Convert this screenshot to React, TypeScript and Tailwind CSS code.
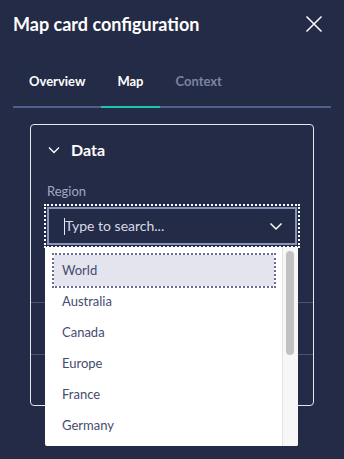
import React from "react";

const items = ["World", "Australia", "Canada", "Europe", "France", "Germany"];

export default function App() {
  return (
    <div
      className="relative w-[344px] h-[459px] overflow-hidden bg-[#242b46] text-white"
      style={{ fontFamily: "Lato, 'Open Sans', sans-serif" }}
    >
      <div className="flex items-start justify-between pl-[13px] pr-[21px] pt-[12px]">
        <h1 className="text-[18px] font-bold leading-[24px]">Map card configuration</h1>
        <svg width="18" height="18" viewBox="0 0 18 18" className="mt-[3px]">
          <path d="M1.5 1.5 L16.5 16.5 M16.5 1.5 L1.5 16.5" stroke="#ffffff" strokeWidth="1.5" fill="none" />
        </svg>
      </div>

      <div className="mx-[13px] mt-[35px] flex border-b-2 border-[#535d8c] text-[13px] font-bold leading-[20px]">
        <div className="px-4 pb-[15px]">Overview</div>
        <div className="-mb-[2px] border-b-2 border-[#1cc7a8] px-4 pb-[15px]">Map</div>
        <div className="px-4 pb-[15px] text-[#7c84a2]">Context</div>
      </div>

      <div className="mx-[30px] mt-[16px] rounded-[4px] border border-[#e6e8ef]">
        <div className="flex h-[50px] items-center pl-[17px]">
          <svg width="12" height="12" viewBox="0 0 12 12">
            <path d="M1 3.5 L6 8.5 L11 3.5" stroke="#ffffff" strokeWidth="1.3" fill="none" />
          </svg>
          <span className="ml-[11px] text-[16px] font-bold leading-[20px]">Data</span>
        </div>
        <div className="px-4 pb-[57px]">
          <div className="mt-[6px] text-[13px] leading-[20px] text-[#a0a7c2]">Region</div>
          <div className="relative mt-[6px]">
            <div className="flex h-[38px] items-center justify-between border-2 border-[#8794bb] pl-[15px] pr-[12px] outline-2 outline-dotted outline-offset-[1px] outline-white">
              <div className="flex items-center">
                <span className="h-[17px] w-px bg-[#e8eaf2]" />
                <span className="text-[14px] leading-[20px] text-[#d6dae8]">Type to search...</span>
              </div>
              <svg width="14" height="14" viewBox="0 0 14 14">
                <path d="M1.5 4.5 L7 10 L12.5 4.5" stroke="#ffffff" strokeWidth="1.5" fill="none" />
              </svg>
            </div>
            <div className="absolute left-[-2px] top-[40px] z-10 flex h-[199px] w-[253px] overflow-hidden rounded-b-[2px] bg-white">
              <div className="flex-1 pt-[8px]">
                {items.map((it, i) => (
                  <div
                    key={it}
                    className={
                      i === 0
                        ? "ml-[9px] mr-[8px] flex h-[31px] items-center bg-[#e3e4ed] pl-[8px] text-[13px] text-[#454c70] outline-2 outline-dotted outline-[#6e6894]"
                        : "ml-[9px] mr-[8px] flex h-[31px] items-center pl-[8px] text-[13px] text-[#454c70]"
                    }
                  >
                    {it}
                  </div>
                ))}
              </div>
              <div className="w-[16px] border-l border-[#e4e4e4] bg-[#f7f7f7] pl-[3px] pt-[4px]">
                <div className="h-[104px] w-[8px] rounded-full bg-[#c1c1c1]" />
              </div>
            </div>
          </div>
        </div>
        <div className="h-[52px] border-t border-[#4a5276]" />
        <div className="h-[51px] border-t border-[#4a5276]" />
      </div>
    </div>
  );
}
